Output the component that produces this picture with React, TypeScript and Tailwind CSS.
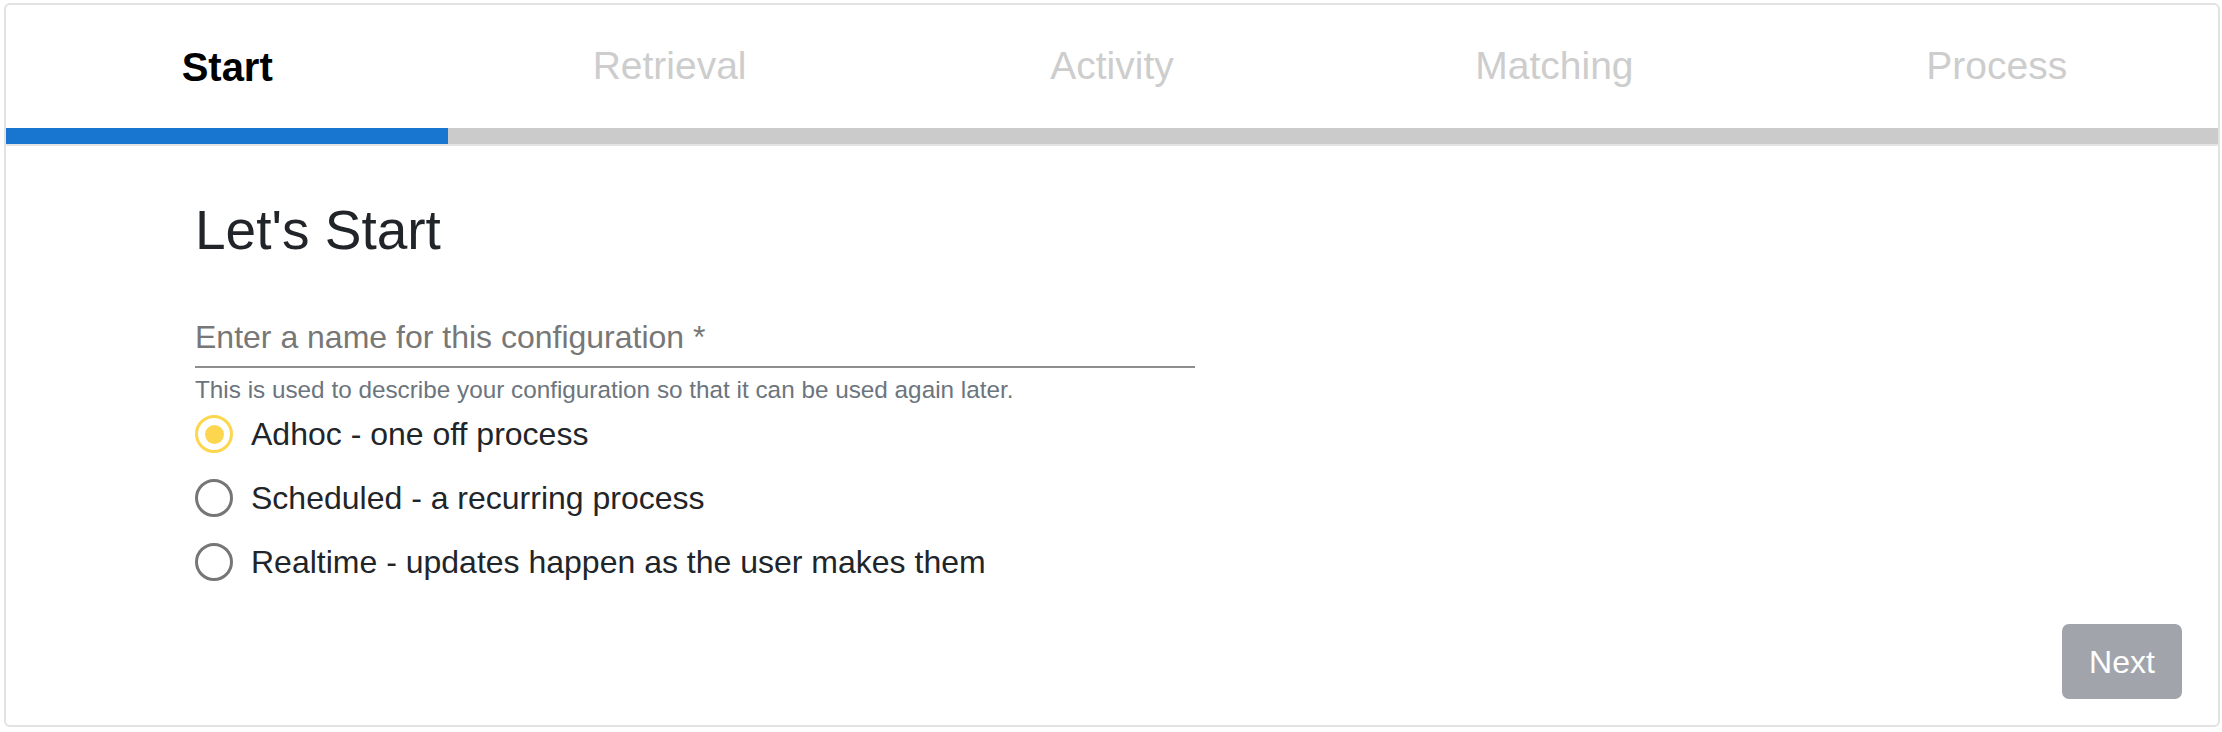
import { useState } from "react";

// Steps of the configuration wizard; only the first one is active here.
const STEPS = ["Start", "Retrieval", "Activity", "Matching", "Process"];

const MODES = [
  { id: "adhoc", label: "Adhoc - one off process" },
  { id: "scheduled", label: "Scheduled - a recurring process" },
  { id: "realtime", label: "Realtime - updates happen as the user makes them" },
];

function Radio({ checked, label, onClick }: { checked: boolean; label: string; onClick: () => void }) {
  return (
    <button type="button" onClick={onClick} className="h-[54px] flex items-center gap-[18px] text-left">
      <span
        className={
          checked
            ? "w-[38px] h-[38px] rounded-full border-[3px] border-[#fdd64f] flex items-center justify-center shrink-0"
            : "w-[38px] h-[38px] rounded-full border-[3px] border-[#767676] flex items-center justify-center shrink-0"
        }
      >
        {checked && <span className="w-[19px] h-[19px] rounded-full bg-[#fdd64f]" />}
      </span>
      <span className="text-[32px] leading-[40px] text-[#212529]">{label}</span>
    </button>
  );
}

export default function App() {
  const [mode, setMode] = useState("adhoc");
  const [name, setName] = useState("");
  const active = 0;

  return (
    <div className="pt-[3px] pl-[4px] pr-[2px] bg-white font-['Liberation_Sans',Arial,sans-serif]">
      <div className="border-2 border-[#e2e2e2] rounded-[6px] bg-white overflow-hidden">
        <div className="grid grid-cols-5 h-[123px]">
          {STEPS.map((step, i) => (
            <div
              key={step}
              className={
                i === active
                  ? "flex items-center justify-center text-[40px] font-bold text-black"
                  : "flex items-center justify-center text-[39px] text-[#cdcdcd]"
              }
            >
              {step}
            </div>
          ))}
        </div>
        <div className="flex h-[16px] bg-[#cbcbcb]">
          <div className="w-1/5 bg-[#1976d0]" />
        </div>
        <div className="h-[2px] bg-[#e4e4e4]" />

        <div className="pl-[189px] pr-[36px] pt-[52px] pb-[26px]">
          <h2 className="text-[55px] leading-[64px] text-[#212529]">Let&apos;s Start</h2>

          <input
            value={name}
            onChange={(e) => setName(e.target.value)}
            placeholder="Enter a name for this configuration *"
            className="mt-[46px] block w-[1000px] h-[60px] border-b-2 border-[#8e8e8e] text-[32px] text-[#212529] placeholder:text-[#777777] outline-none"
          />
          <p className="mt-[7px] text-[24.3px] leading-[30px] text-[#6c757d]">
            This is used to describe your configuration so that it can be used again later.
          </p>

          <div className="mt-[2px] flex flex-col items-start gap-[10px]">
            {MODES.map((m) => (
              <Radio key={m.id} checked={mode === m.id} label={m.label} onClick={() => setMode(m.id)} />
            ))}
          </div>

          <div className="mt-[35px] flex justify-end">
            <button
              type="button"
              disabled={!name}
              className="w-[120px] h-[75px] rounded-[7px] bg-[#a1a5ab] text-white text-[32px]"
            >
              Next
            </button>
          </div>
        </div>
      </div>
    </div>
  );
}
